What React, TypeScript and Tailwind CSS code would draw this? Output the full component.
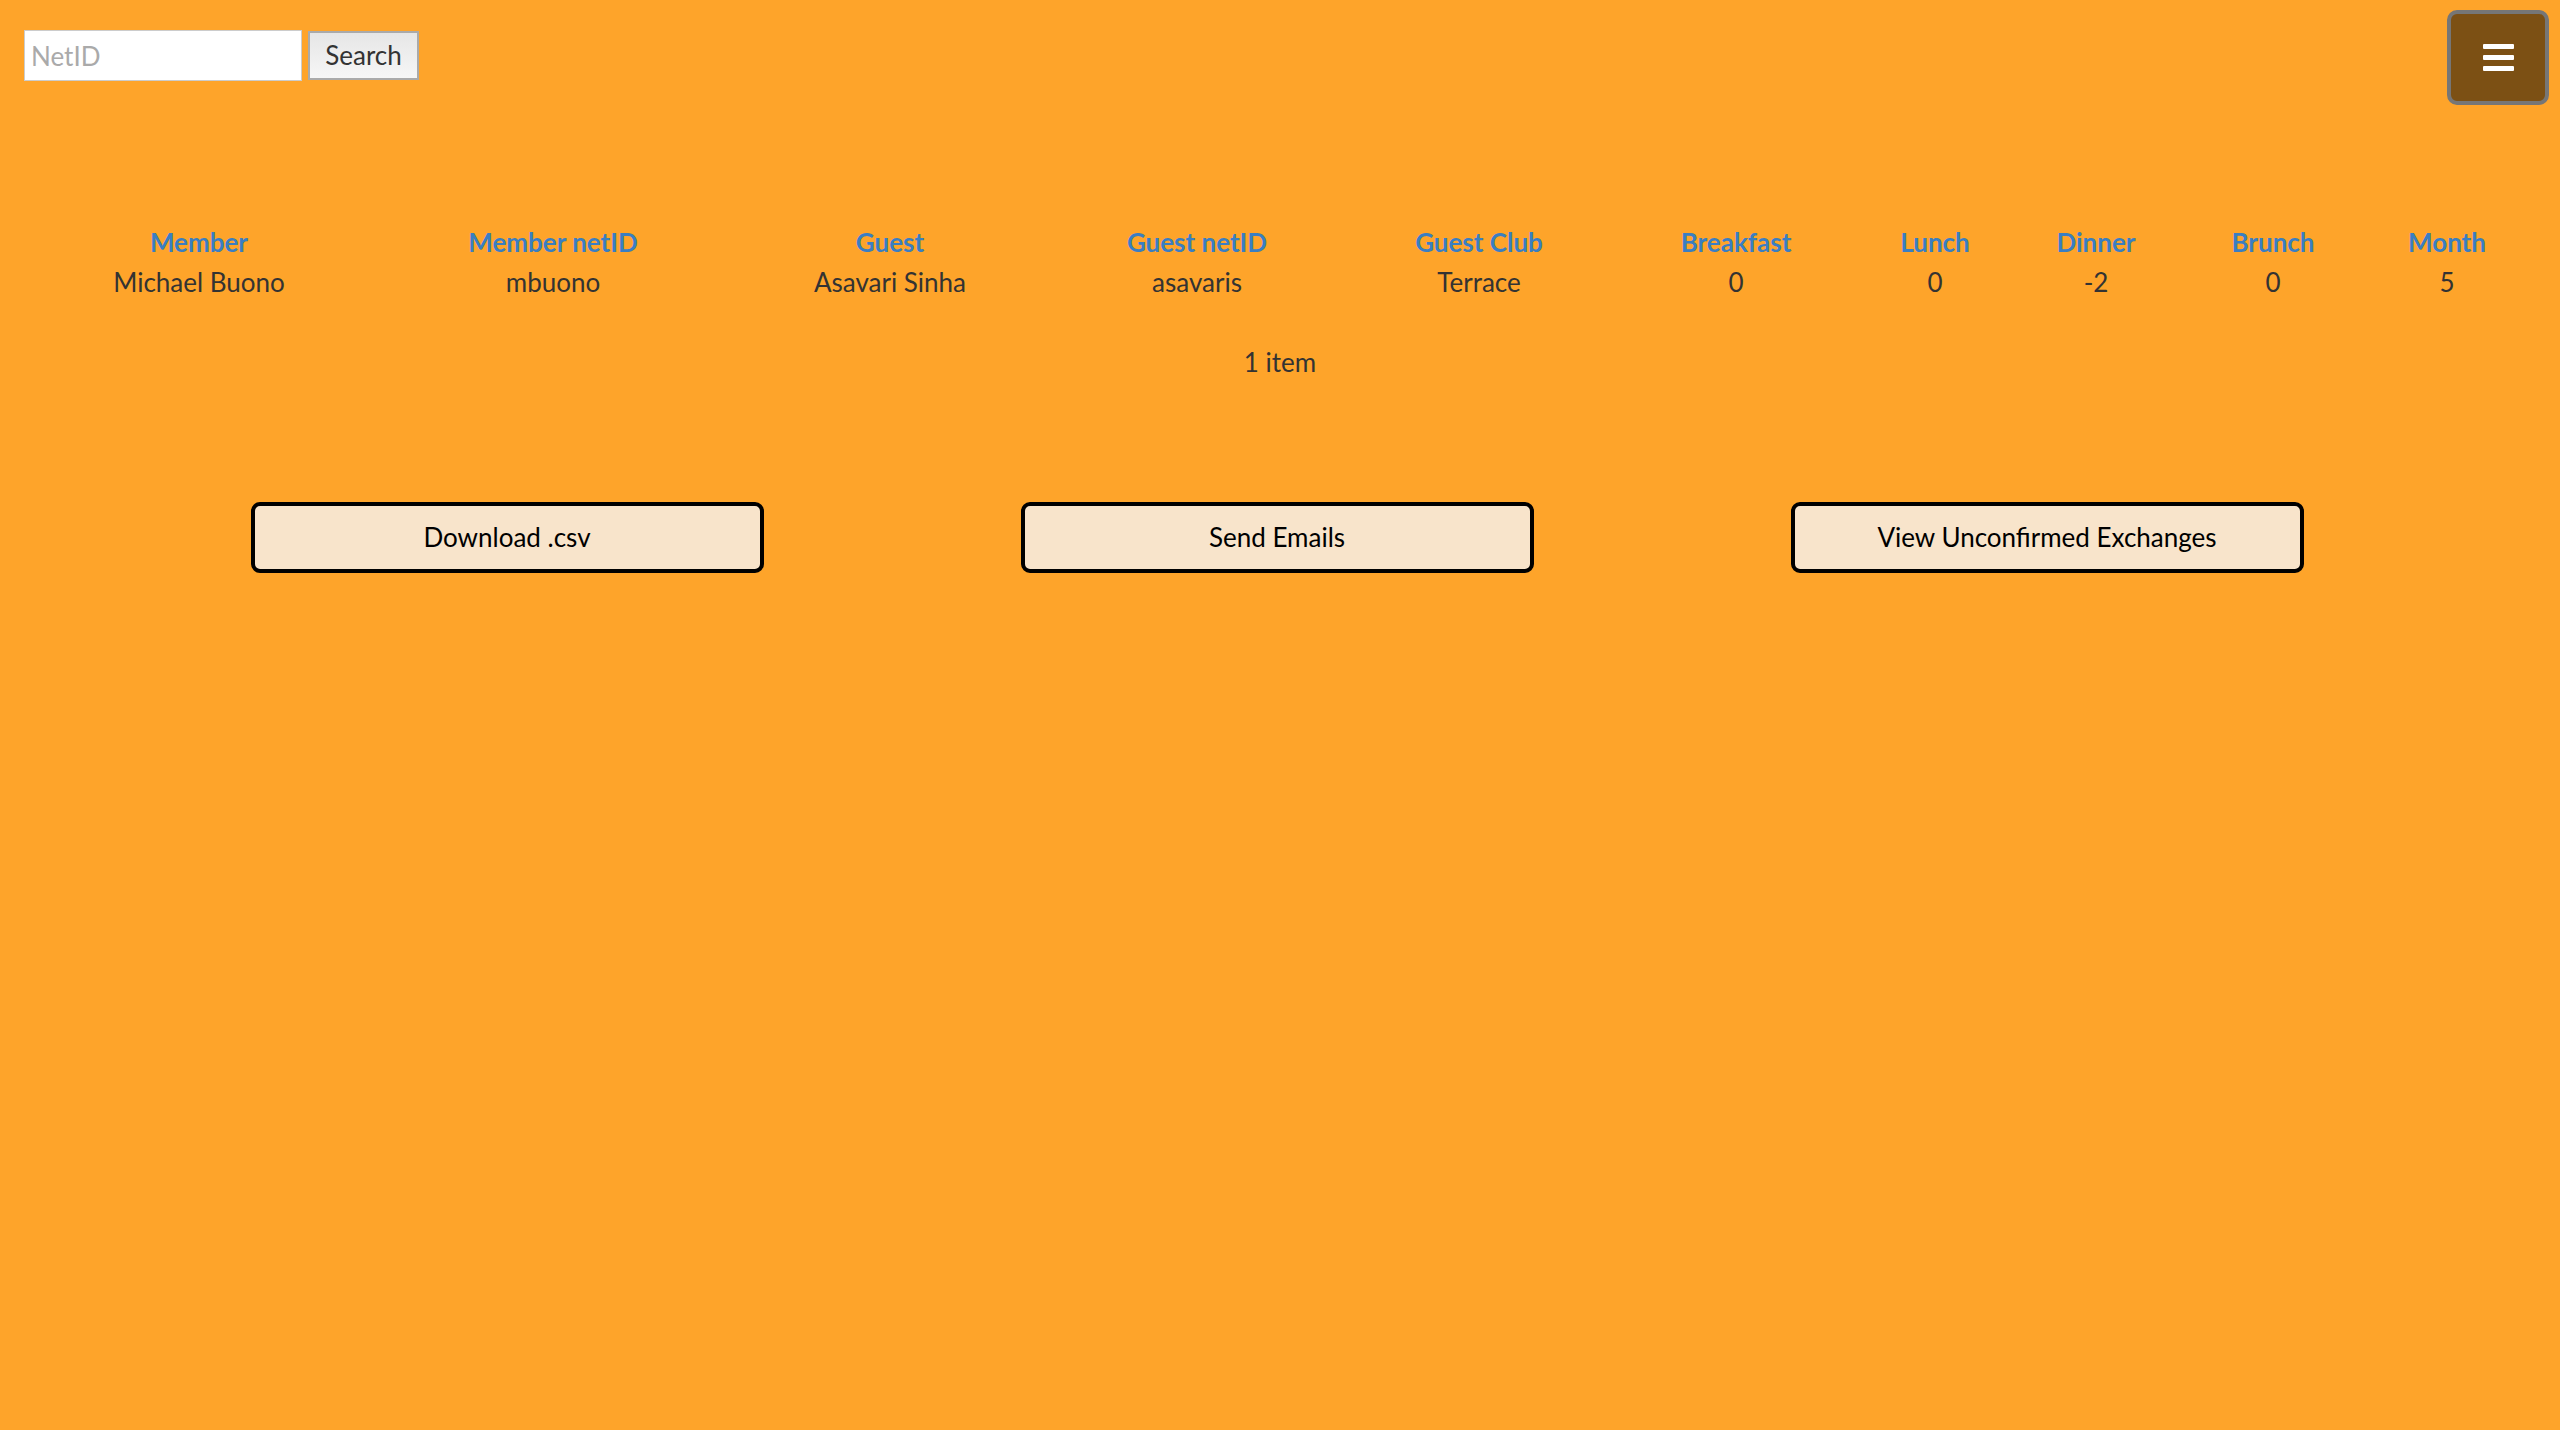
import React from "react";

const cols = [
  { h: "Member", v: "Michael Buono", w: 344 },
  { h: "Member netID", v: "mbuono", w: 364 },
  { h: "Guest", v: "Asavari Sinha", w: 310 },
  { h: "Guest netID", v: "asavaris", w: 304 },
  { h: "Guest Club", v: "Terrace", w: 260 },
  { h: "Breakfast", v: "0", w: 254 },
  { h: "Lunch", v: "0", w: 144 },
  { h: "Dinner", v: "-2", w: 178 },
  { h: "Brunch", v: "0", w: 176 },
  { h: "Month", v: "5", w: 172 },
];

export default function App() {
  return (
    <div
      className="min-h-[1430px] w-full bg-[#fea42a] text-[#333]"
      style={{ fontFamily: "Lato, 'Open Sans', sans-serif" }}
    >
      <div className="flex items-start justify-between pl-[24px] pr-[11px] pt-[10px]">
        <div className="mt-[20px] flex items-center gap-[6px]">
          <input
            placeholder="NetID"
            className="h-[51px] w-[278px] border border-[#ccc] bg-white px-[6px] text-[26px] text-[#333] outline-none placeholder:text-[#aaa]"
          />
          <button className="h-[49px] w-[111px] border-2 border-[#aaa] bg-gradient-to-b from-[#e6e6e6] to-[#f6f6f6] text-[26px] text-[#333]">
            Search
          </button>
        </div>
        <button className="flex h-[95px] w-[102px] flex-col items-center justify-center gap-[6px] rounded-[10px] border-[4px] border-[#767676] bg-[#7c5014]">
          <span className="block h-[5px] w-[31px] rounded-[1px] bg-white" />
          <span className="block h-[5px] w-[31px] rounded-[1px] bg-white" />
          <span className="block h-[5px] w-[31px] rounded-[1px] bg-white" />
        </button>
      </div>

      <div className="mt-[117px] px-[27px]">
        <table className="table-fixed border-collapse text-[26px]">
          <colgroup>
            {cols.map((c) => (
              <col key={c.h} style={{ width: c.w }} />
            ))}
          </colgroup>
          <thead>
            <tr>
              {cols.map((c) => (
                <th key={c.h} className="h-[40px] p-0 text-center font-bold text-[#3a7ec2]">
                  {c.h}
                </th>
              ))}
            </tr>
          </thead>
          <tbody>
            <tr>
              {cols.map((c) => (
                <td key={c.h} className="h-[40px] p-0 text-center">
                  {c.v}
                </td>
              ))}
            </tr>
          </tbody>
        </table>
        <div className="mt-[41px] text-center text-[26px]">1 item</div>
      </div>

      <div className="mt-[120px] grid grid-cols-3 pl-[122px] pr-[128px]">
        {["Download .csv", "Send Emails", "View Unconfirmed Exchanges"].map((t) => (
          <div key={t} className="flex justify-center">
            <button className="h-[71px] w-[513px] rounded-[9px] border-[4px] border-black bg-[#f8e4cb] text-[26px] text-black">
              {t}
            </button>
          </div>
        ))}
      </div>
    </div>
  );
}
